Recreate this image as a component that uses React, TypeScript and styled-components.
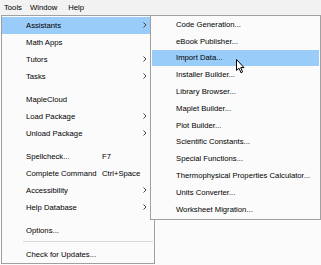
import React from 'react';
import styled, { createGlobalStyle } from 'styled-components';

const GlobalStyle = createGlobalStyle`
  html, body {
    margin: 0;
    padding: 0;
    background: #fbfbfb;
    overflow: hidden;
  }
  body {
    font-family: "Liberation Sans", Arial, sans-serif;
    font-size: 7.7px;
    color: #000;
  }
`;

const Page = styled.div`
  width: 321px;
  height: 265px;
  display: flex;
  flex-direction: column;
  position: relative;
`;

const MenuBar = styled.div`
  height: 15px;
  background: #f2f2f2;
  display: flex;
  align-items: center;
  padding-left: 4px;
`;

const BarItem = styled.div<{ pad: number }>`
  padding-right: ${(p) => p.pad}px;
  line-height: 15px;
`;

const MainMenu = styled.div`
  margin-left: 1px;
  width: 151px;
  border: 1px solid #a0a0a0;
  background: #fbfbfb;
  padding: 1px 1px 0 0;
  display: flex;
  flex-direction: column;
`;

const Item = styled.div<{ active?: boolean; h: number }>`
  position: relative;
  height: ${(p) => p.h}px;
  display: grid;
  grid-template-columns: 76px 1fr 10px;
  align-items: center;
  padding-left: 24px;
  background: ${(p) => (p.active ? '#99ccf8' : 'transparent')};
  white-space: nowrap;
`;

const Label = styled.span`
  overflow: visible;
`;

const Shortcut = styled.span``;

const Sep = styled.div<{ line?: boolean }>`
  height: ${(p) => (p.line ? 7 : 6)}px;
  display: flex;
  align-items: flex-start;
  padding-left: 21px;
  &::after {
    content: '';
    display: ${(p) => (p.line ? 'block' : 'none')};
    margin-top: 2px;
    height: 1px;
    flex: 1;
    background: #d8d8d8;
  }
`;

const SubMenu = styled.div`
  position: absolute;
  left: 148px;
  top: -2px;
  width: 167px;
  border: 1px solid #a0a0a0;
  background: #fbfbfb;
  padding: 0 1px 1px 1px;
  display: flex;
  flex-direction: column;
  z-index: 2;
`;

const Cursor = styled.svg`
  position: absolute;
  left: 236px;
  top: 59px;
  z-index: 5;
`;

const Chevron = () => (
  <svg width="4" height="6" viewBox="0 0 4 6">
    <polyline points="0.5,0.5 3,3 0.5,5.5" fill="none" stroke="#444" strokeWidth="1" />
  </svg>
);

type Entry = { label?: string; key?: string; sub?: boolean; sep?: boolean; line?: boolean };

const mainItems: Entry[] = [
  { label: 'Assistants', sub: true },
  { label: 'Math Apps' },
  { label: 'Tutors', sub: true },
  { label: 'Tasks', sub: true },
  { sep: true },
  { label: 'MapleCloud' },
  { label: 'Load Package', sub: true },
  { label: 'Unload Package', sub: true },
  { sep: true },
  { label: 'Spellcheck...', key: 'F7' },
  { label: 'Complete Command', key: 'Ctrl+Space' },
  { label: 'Accessibility', sub: true },
  { label: 'Help Database', sub: true },
  { sep: true },
  { label: 'Options...' },
  { sep: true, line: true },
  { label: 'Check for Updates...' },
];

const subItems = [
  'Code Generation...',
  'eBook Publisher...',
  'Import Data...',
  'Installer Builder...',
  'Library Browser...',
  'Maplet Builder...',
  'Plot Builder...',
  'Scientific Constants...',
  'Special Functions...',
  'Thermophysical Properties Calculator...',
  'Units Converter...',
  'Worksheet Migration...',
];

function App() {
  return (
    <Page>
      <GlobalStyle />
      <MenuBar>
        <BarItem pad={8}>Tools</BarItem>
        <BarItem pad={11}>Window</BarItem>
        <BarItem pad={0}>Help</BarItem>
      </MenuBar>
      <MainMenu>
        {mainItems.map((it, i) =>
          it.sep ? (
            <Sep key={i} line={it.line} />
          ) : (
            <Item key={i} h={17} active={i === 0}>
              <Label>{it.label}</Label>
              <Shortcut>{it.key}</Shortcut>
              <span>{it.sub && <Chevron />}</span>
              {i === 0 && (
                <SubMenu>
                  {subItems.map((s, j) => (
                    <Item key={s} h={16.8} active={j === 2}>
                      <Label>{s}</Label>
                      <span />
                      <span />
                    </Item>
                  ))}
                </SubMenu>
              )}
            </Item>
          )
        )}
      </MainMenu>
      <Cursor width="10" height="15" viewBox="0 0 10 15">
        <path d="M0.5,0.5 L0.5,11.5 L3,9.2 L5,13.8 L6.6,13 L4.7,8.6 L8,8.6 Z" fill="#fff" stroke="#000" strokeWidth="1" />
      </Cursor>
    </Page>
  );
}

export default App;
